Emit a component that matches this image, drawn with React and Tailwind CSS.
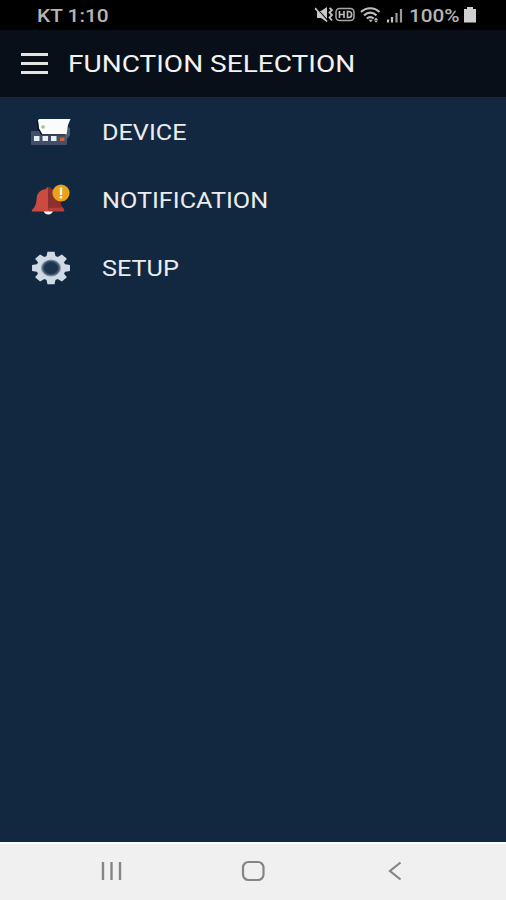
import React from "react";

const DeviceIcon = () => (
  <svg width="44" height="34" viewBox="0 0 44 34">
    <rect x="3" y="16" width="36" height="14" rx="1" fill="#434f66" />
    <path d="M38 12.500h4v8l-3.500 4h-2z" fill="#4a5a74" />
    <path d="M11 4h31.500l-2.500 6-1.500 9.500H14.500L11 13.500 10 5.500z" fill="#fafbfc" />
    <path d="M9.300 5.500l.9 8 3.500 6" fill="none" stroke="#0d1420" strokeWidth="1.300" />
    <path d="M13.500 19.700h24" stroke="#1a2230" strokeWidth="1" />
    <circle cx="15" cy="12" r="1.800" fill="#9cc48a" />
    <rect x="6" y="21" width="5.500" height="5" fill="#e6f0f6" />
    <rect x="14.500" y="21" width="5.500" height="5" fill="#e6f0f6" />
    <rect x="23" y="21" width="5.500" height="5" fill="#e6f0f6" />
    <rect x="32" y="22.500" width="4.500" height="3.500" fill="#d2603f" />
  </svg>
);

const BellIcon = () => (
  <svg width="44" height="34" viewBox="0 0 44 34">
    <path d="M15.500 27.500h9.500c-.5 2.800-2.200 4-4.700 4s-4.300-1.200-4.800-4z" fill="#f1f2f4" />
    <path d="M20.500 4c-1.500 0-2.500 1-2.500 2-6 .8-9 4.500-9.300 9-.4 5.500-1.200 9-4.700 12-.5.500-.2 1.500.5 1.500h16z" fill="#cc4b41" />
    <path d="M20.500 4c1.500 0 2.500 1 2.500 2 6 .8 9 4.500 9.300 9 .4 5.500.7 8 3.700 11.500H20.500z" fill="#922d2b" />
    <path d="M20.500 25l14.500-.5 1.200 2.500c.3.700 0 1.500-.7 1.500h-15z" fill="#b83f38" />
    <circle cx="33" cy="10" r="8.600" fill="#e9a11c" />
    <path d="M33 4.500v7.500" stroke="#fff5d8" strokeWidth="2.400" />
    <circle cx="33" cy="14.300" r="1.400" fill="#fff5d8" />
  </svg>
);

const GearIcon = () => (
  <svg width="44" height="34" viewBox="0 0 44 34">
    <g transform="translate(23 17) scale(1.170 1)">
      {[0, 45, 90, 135, 180, 225, 270, 315].map((a) => (
        <path key={a} d="M-4-11l1-5.200h6l1 5.200z" fill="#cfdae4" transform={`rotate(${a})`} />
      ))}
      <circle r="12.500" fill="#cfdae4" />
      <circle r="8.600" fill="#8496aa" />
      <circle r="7.500" fill="#3e5269" />
      <circle r="6" fill="#1d344e" />
    </g>
  </svg>
);

const StatusIcons = () => (
  <svg width="90" height="20" viewBox="0 0 90 20">
    {/* muted / vibrate */}
    <path d="M2 6h4l6-4v15l-6-4H2z" fill="#c8c8c8" />
    <path d="M1 3l12 13" stroke="#000" strokeWidth="1.600" />
    <path d="M0 3l12 13.500" stroke="#c8c8c8" strokeWidth="1.600" />
    <path d="M14.500 3l2.500 2-2.500 2.500 2.500 2.500-2.500 2.500 2.500 3" fill="none" stroke="#c2c2c2" strokeWidth="1.800" />
    {/* HD */}
    <rect x="21" y="3.500" width="18" height="12" rx="3.500" fill="none" stroke="#a8a8a8" strokeWidth="1.500" />
    <path d="M24.500 6v7M29 6v7M24.500 9.500H29M32.500 6.500v6h1.500c3.500 0 3.500-6 0-6z" fill="none" stroke="#b8b8b8" strokeWidth="1.700" />
    {/* wifi */}
    <path d="M46 7c5.500-5 13-5 18.500 0M49 10.300c4-3.500 8.500-3.500 12.500 0M51.800 13.500c2.400-2 4.600-2 7 0" fill="none" stroke="#bdbdbd" strokeWidth="2.200" />
    <path d="M53.500 14.800h4.500l-2.200 2.400zM59 15h4l-2-2.500zM59 15.500l2 2.200 2-2.200z" fill="#bdbdbd" />
    {/* signal */}
    <path d="M73 14.500v3M77 12v5.500" stroke="#c2c2c2" strokeWidth="2.200" />
    <path d="M81.500 8v9.500M86 4v13.500" stroke="#999" strokeWidth="2.200" />
  </svg>
);

const menu = [
  { label: "DEVICE", Icon: DeviceIcon },
  { label: "NOTIFICATION", Icon: BellIcon },
  { label: "SETUP", Icon: GearIcon },
];

const App = () => {
  return (
    <div className="flex h-[900px] w-[506px] flex-col overflow-hidden bg-[#122840] font-['Roboto',sans-serif]">
      <div className="flex h-[30px] items-center justify-between bg-black pr-[29px] pl-[36.500px] text-[#b5b5b5]">
        <span className="origin-left scale-x-[1.160] text-[18px] font-medium">KT 1:10</span>
        <div className="flex items-center">
          <StatusIcons />
          <span className="ml-[4px] w-[52px] text-[18px] whitespace-nowrap">
            <span className="inline-block origin-left scale-x-[1.150] font-medium">100%</span>
          </span>
          <svg width="14" height="16" viewBox="0 0 14 16" className="ml-[2px]">
            <path d="M4 0h6v2h3v13.500H1V2h3z" fill="#d0d0d0" />
          </svg>
        </div>
      </div>

      <header className="flex h-[67px] items-center bg-[#080f18] pl-[21px]">
        <div className="flex w-[27px] flex-col gap-[6px]">
          <div className="h-[3px] bg-[#e6e4e2]"></div>
          <div className="h-[3px] bg-[#e6e4e2]"></div>
          <div className="h-[3px] bg-[#e6e4e2]"></div>
        </div>
        <h1 className="ml-[20px] origin-left scale-x-[1.168] pt-px text-[24px] font-[450] whitespace-nowrap text-[#f2f2f2]">
          FUNCTION SELECTION
        </h1>
      </header>

      <main className="flex-1 pt-px">
        {menu.map(({ label, Icon }) => (
          <div key={label} className="flex h-[68px] items-center pl-[28px]">
            <Icon />
            <span className="ml-[30px] origin-left scale-x-[1.120] pt-[2px] text-[22.500px] font-[450] text-[#ececec]">
              {label}
            </span>
          </div>
        ))}
      </main>

      <nav className="flex h-[58px] items-center border-t-2 border-white bg-[#f0f0f0] pb-[2px] pl-[100px]">
        <svg width="24" height="20" viewBox="0 0 24 20">
          <path d="M3 1v18M11.500 1v18M20 1v18" stroke="#858585" strokeWidth="2.400" />
        </svg>
        <svg width="26" height="22" viewBox="0 0 26 22" className="ml-[116px]">
          <rect x="3" y="2" width="20.500" height="18" rx="5.500" fill="none" stroke="#858585" strokeWidth="2.200" />
        </svg>
        <svg width="16" height="22" viewBox="0 0 16 22" className="ml-[121px]">
          <path d="M13.500 2.500L3 11l10.500 8.500" fill="none" stroke="#858585" strokeWidth="2.200" />
        </svg>
      </nav>
    </div>
  );
};

export default App;
